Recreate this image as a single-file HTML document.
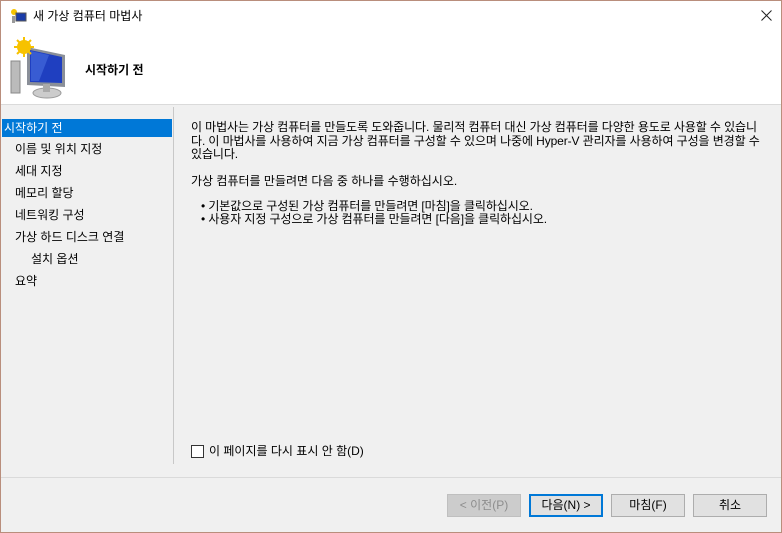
<!DOCTYPE html>
<html><head><meta charset="utf-8"><style>
*{margin:0;padding:0;box-sizing:border-box}
body{width:782px;height:533px;overflow:hidden;font-family:"Liberation Sans","Noto Sans CJK KR","NanumGothic",sans-serif;font-size:12px;color:#000;background:#f0f0f0;position:relative}
.win{position:absolute;left:0;top:0;width:782px;height:533px;border:1px solid #b98e7c;background:#f0f0f0}
.hdr{position:absolute;left:0;top:0;width:780px;height:104px;background:#fff;border-bottom:1px solid #dadada}
.t{position:absolute;white-space:nowrap}
.nav div{position:absolute;left:1px;width:170px;height:18px;line-height:18px;padding-left:13px}
.btn{position:absolute;top:493px;width:74px;height:23px;border:1px solid #adadad;background:#e1e1e1;text-align:center;line-height:21px}
</style></head><body><div class="win">
<div class="hdr">
<svg style="position:absolute;left:9px;top:7px" width="18" height="16" viewBox="0 0 18 16"><circle cx="4" cy="4" r="3" fill="#f5c400"/><rect x="6" y="5" width="10" height="8" fill="#1a3ca8" stroke="#555"/><rect x="2" y="8" width="3" height="7" fill="#999"/></svg>
<div class="t" style="left:32px;top:6px;font-size:12px">새 가상 컴퓨터 마법사</div>
<svg style="position:absolute;left:760px;top:9px" width="11" height="11" viewBox="0 0 11 11"><path d="M0.5 0.5L10.5 10.5M10.5 0.5L0.5 10.5" stroke="#222" stroke-width="1"/></svg>
<svg style="position:absolute;left:8px;top:36px" width="60" height="62" viewBox="0 0 60 62">
<rect x="2" y="24" width="9" height="32" fill="#bbb" stroke="#888"/>
<polygon points="18,10 56,18 56,50 18,48" fill="#8a8f98"/>
<polygon points="21,13 53,20 53,46 21,45" fill="#1f3fc0"/>
<polygon points="22,14 40,18 30,44 22,44" fill="#4a6fe0" opacity=".6"/>
<ellipse cx="38" cy="56" rx="14" ry="5" fill="#ccc" stroke="#999"/>
<rect x="34" y="47" width="7" height="8" fill="#aaa"/>
<circle cx="15" cy="10" r="7" fill="#f7c200"/>
<g stroke="#f7c200" stroke-width="2"><line x1="15" y1="0" x2="15" y2="20"/><line x1="5" y1="10" x2="25" y2="10"/><line x1="8" y1="3" x2="22" y2="17"/><line x1="22" y1="3" x2="8" y2="17"/></g>
</svg>
<div class="t" style="left:84px;top:60px;font-weight:bold;font-size:12px">시작하기 전</div>
</div>
<div class="nav">
<div style="top:118px;background:#0078d7;color:#fff;padding-left:2px">시작하기 전</div>
<div style="top:139px;padding-left:13px">이름 및 위치 지정</div>
<div style="top:161px;padding-left:13px">세대 지정</div>
<div style="top:183px;padding-left:13px">메모리 할당</div>
<div style="top:205px;padding-left:13px">네트워킹 구성</div>
<div style="top:227px;padding-left:13px">가상 하드 디스크 연결</div>
<div style="top:249px;padding-left:29px">설치 옵션</div>
<div style="top:271px;padding-left:13px">요약</div>
</div>
<div style="position:absolute;left:172px;top:106px;width:1px;height:357px;background:#c8c8c8"></div>
<div style="position:absolute;left:0;top:476px;width:780px;height:1px;background:#dadada"></div>
<div class="t" style="left:190px;top:120px;line-height:13.5px;white-space:normal;width:574px;letter-spacing:-0.1px">이 마법사는 가상 컴퓨터를 만들도록 도와줍니다. 물리적 컴퓨터 대신 가상 컴퓨터를 다양한 용도로 사용할 수 있습니다. 이 마법사를 사용하여 지금 가상 컴퓨터를 구성할 수 있으며 나중에 Hyper-V 관리자를 사용하여 구성을 변경할 수 있습니다.</div>
<div class="t" style="left:190px;top:171px">가상 컴퓨터를 만들려면 다음 중 하나를 수행하십시오.</div>
<div class="t" style="left:200px;top:196px;letter-spacing:-0.1px">• 기본값으로 구성된 가상 컴퓨터를 만들려면 [마침]을 클릭하십시오.</div>
<div class="t" style="left:200px;top:209px;letter-spacing:-0.1px">• 사용자 지정 구성으로 가상 컴퓨터를 만들려면 [다음]을 클릭하십시오.</div>
<div style="position:absolute;left:190px;top:444px;width:13px;height:13px;border:1px solid #333;background:#fff"></div>
<div class="t" style="left:208px;top:441px">이 페이지를 다시 표시 안 함(D)</div>
<div class="btn" style="left:446px;color:#8d8d8d;border-color:#bfbfbf;background:#ccc">&lt; 이전(P)</div>
<div class="btn" style="left:528px;border:2px solid #0078d7;line-height:19px">다음(N) &gt;</div>
<div class="btn" style="left:610px">마침(F)</div>
<div class="btn" style="left:692px">취소</div>
</div></body></html>
